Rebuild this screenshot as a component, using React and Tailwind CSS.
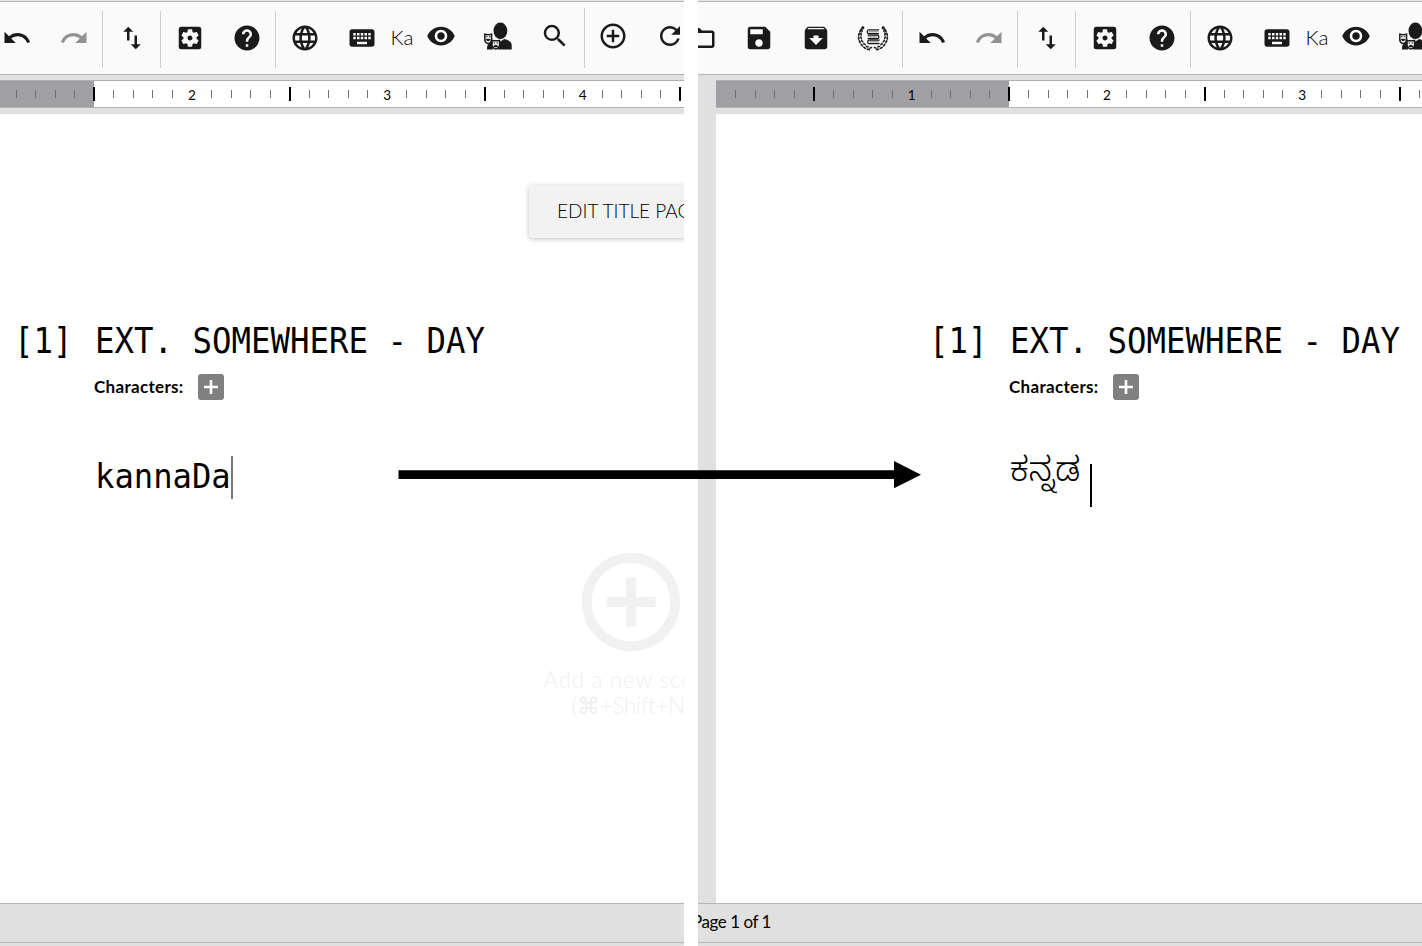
import React from "react";
import {
  MdFolderOpen, MdSave, MdArchive, MdUndo, MdRedo, MdImportExport,
  MdSettingsApplications, MdHelp, MdLanguage, MdKeyboard, MdVisibility,
  MdSearch, MdAddCircleOutline, MdRefresh,
} from "react-icons/md";

const LEAVES = [
  [12.4, 25, 10], [8.8, 23.8, 30], [5.8, 21.4, 50], [3.6, 18.4, 68], [2.4, 15, 85],
  [2.4, 11.4, 100], [3.4, 8, 115], [5, 5, 125],
];

function LaurelHalf() {
  return (
    <g>
      <path d="M6.4 4C2.6 9.5 2.8 20 13.2 24.6" fill="none" stroke="currentColor" strokeWidth="0.6" />
      {LEAVES.map(([x, y, a], i) => (
        <g key={i}>
          <ellipse cx={x - 1} cy={y + 0.6} rx="1.9" ry="0.9" transform={`rotate(${a} ${x} ${y})`} />
          <ellipse cx={x + 1.5} cy={y - 1.3} rx="1.5" ry="0.8" transform={`rotate(${a - 35} ${x + 1.5} ${y - 1.3})`} />
        </g>
      ))}
    </g>
  );
}

function LaurelIcon() {
  return (
    <svg width="32" height="28" viewBox="0 0 32 28" fill="currentColor">
      <LaurelHalf />
      <g transform="translate(32 0) scale(-1 1)"><LaurelHalf /></g>
      <g fill="none" stroke="currentColor">
        <path strokeWidth="1.3" d="M22 5.8H11.6c-1.7 0-1.7 3.9 0 3.9H22M10.6 11.2h10c1.7 0 1.7 3.4 0 3.4h-10M22.6 16.2H12c-1.7 0-1.7 3.4 0 3.4h10.6" />
        <path strokeWidth="0.8" opacity="0.7" d="M12 7.8h9.5M11 12.9h9.5M12.5 17.9h9.5" />
      </g>
    </svg>
  );
}

function CharactersIcon() {
  return (
    <svg width="28" height="28" viewBox="0 0 28 28" fill="currentColor">
      <ellipse cx="16.4" cy="8.8" rx="6.9" ry="8.3" />
      <path d="M14 27.4V21l6.3-4c3.8 1 7.4 2.8 7.4 6.2v4.2z" />
      <path d="M3 27.4c0-3 .3-4.6 1.7-5.6L8 19.6l1 7.8z" />
      <path d="M.8 12.2c2.2.6 4.6.6 6.8 0v5.2c0 2.2-1.5 3.6-3.4 4.2-1.9-.6-3.4-2-3.4-4.2z" fill="#fafafa" stroke="currentColor" strokeWidth="1.5" />
      <path d="M1.9 14.7h1.6M4.9 14.7h1.6M2.2 17.3h4c-.6 1.9-3.4 1.9-4 0z" stroke="currentColor" strokeWidth="1" />
      <path d="M8 18.4c2.6.6 5 .6 7.6 0v4.4c0 2.2-1.8 3.7-3.8 4.3-2-.6-3.8-2.1-3.8-4.3z" fill="#fafafa" stroke="currentColor" strokeWidth="1.5" />
      <path d="M9.5 21h1.6M12.5 21h1.6M10 24.8c.6-1.9 3-1.9 3.6 0z" stroke="currentColor" strokeWidth="1.1" />
    </svg>
  );
}

function Tool({ icon: Icon, className = "" }) {
  return (
    <div className={"flex h-full w-[57px] shrink-0 items-center justify-center " + className}>
      <Icon size={30} />
    </div>
  );
}

function Divider({ className = "h-[57px] mt-[3px]" }) {
  return (
    <div className="flex w-[1.2px] shrink-0 justify-center">
      <div className={"w-px shrink-0 bg-[#cfcfcf] " + className} />
    </div>
  );
}

function Toolbar() {
  return (
    <header className="h-[75px] border-b border-[#b3b3b3] bg-[#fafafa] text-[#1a1a1a]">
      <div className="h-[2px] border-b border-[#b5b5b5] bg-[#e6e6e6]" />
      <div className="-ml-[24.2px] flex h-[72px] items-center">
        <Tool icon={MdFolderOpen} />
        <Tool icon={MdSave} />
        <Tool icon={MdArchive} />
        <div className="flex w-[57px] shrink-0 items-center justify-center"><LaurelIcon /></div>
        <Divider />
        <Tool icon={MdUndo} />
        <Tool icon={MdRedo} className="text-[#929292]" />
        <Divider />
        <Tool icon={MdImportExport} />
        <Divider />
        <Tool icon={MdSettingsApplications} />
        <Tool icon={MdHelp} />
        <Divider />
        <Tool icon={MdLanguage} />
        <Tool icon={MdKeyboard} />
        <div className="mb-[2px] w-[22px] shrink-0 whitespace-nowrap text-center font-[Lato] text-[20.5px] leading-6 font-light text-black">Ka</div>
        <Tool icon={MdVisibility} className="pb-[4px]" />
        <Tool icon={CharactersIcon} className="pb-[4px]" />
        <Tool icon={MdSearch} className="pb-[4px]" />
        <Divider className="h-[60px]" />
        <Tool icon={MdAddCircleOutline} className="pb-[4px]" />
        <Tool icon={MdRefresh} className="pb-[4px]" />
      </div>
    </header>
  );
}

function Ruler() {
  return (
    <div className="ml-[18px] h-[28px] overflow-hidden border-y border-[#b0b0b0] bg-[linear-gradient(90deg,#a09fa4_293px,#fff_293px)]">
      <div className="ml-[10.1px] flex h-full items-center">
        {Array.from({ length: 48 }, (_, k) => {
          const n = k + 1;
          return (
            <div key={n} className="flex w-[19.54px] shrink-0 justify-center">
              {n % 10 === 0 ? (
                <span className="pt-px font-[Lato] text-[13.5px] leading-4 text-black">{n / 10}</span>
              ) : n % 5 === 0 ? (
                <i className="h-[14px] w-[2px] bg-black" />
              ) : (
                <i className="h-[8px] w-px bg-[#6f6f6f]" />
              )}
            </div>
          );
        })}
      </div>
    </div>
  );
}

function ScriptPage({ children }) {
  return (
    <main className="ml-[18px] mt-[6px] h-[789px] bg-white pt-[71px]">
      <button className="ml-[728px] block h-[53px] w-[190px] rounded-[3px] bg-[#f2f2f2] pl-[28px] text-left whitespace-nowrap font-[Lato] text-[19px] font-light text-black shadow-[0_1px_5px_rgba(0,0,0,0.25)]">
        EDIT TITLE PAGE
      </button>
      <h1 className="mt-[84px] flex h-[40px] origin-[50%_32px] scale-y-[1.07] whitespace-pre font-['DejaVu_Sans_Mono',monospace] text-[32.4px] leading-[40px] text-black">
        <span className="ml-[213px] w-[81px]">[1]</span>
        <span>EXT. SOMEWHERE - DAY</span>
      </h1>
      <div className="mt-[12px] ml-[293px] flex h-[26px] items-center">
        <span className="w-[104.4px] font-[Lato] text-[17px] font-bold tracking-[0.32px] text-black">Characters:</span>
        <button className="flex h-[26px] w-[26px] items-center justify-center rounded-[3px] bg-[#808080]">
          <svg width="26" height="26" viewBox="0 0 26 26">
            <path d="M13 6v14M6 13h14" stroke="#fff" strokeWidth="2.6" />
          </svg>
        </button>
      </div>
      <div className="mt-[56px] ml-[294px] flex h-[51px] text-black">{children}</div>
      <div className="mt-[36px] ml-[710px] flex w-[240px] flex-col items-center font-[Lato] text-[22.5px] leading-[26px] font-light text-[#efefef]">
        <MdAddCircleOutline size={118} className="text-[#f1f1f1]" />
        <span className="mt-[6px] tracking-[0.7px]">Add a new scene</span>
        <span className="tracking-[-0.3px]">(⌘+Shift+N)</span>
      </div>
    </main>
  );
}

function Editor({ children }) {
  return (
    <div className="h-[946px] w-[1000px] bg-[#e0e0e0]">
      <Toolbar />
      <div className="h-[5px]" />
      <Ruler />
      <ScriptPage>{children}</ScriptPage>
      <footer className="h-[40px] border-y border-[#b5b5b5] font-[Lato] text-[17px] leading-[36px] tracking-[-0.45px] text-black">
        <span className="-ml-[6px]">Page 1 of 1</span>
      </footer>
    </div>
  );
}

export default function App() {
  return (
    <div className="relative flex h-[946px] w-[1422px] gap-[14px] overflow-hidden bg-white">
      <section className="w-[684px] shrink-0 overflow-hidden">
        <div className="-ml-[217px]">
          <Editor>
            <span className="mt-px h-[40px] w-[136px] origin-[0_32px] scale-y-[1.03] font-['DejaVu_Sans_Mono',monospace] text-[32.2px] leading-[40px]">kannaDa</span>
            <i className="h-[43px] w-[2px] bg-[#777]" />
          </Editor>
        </div>
      </section>
      <section className="w-[724px] shrink-0 overflow-hidden">
        <Editor>
          <span className="w-[80px] pt-px whitespace-nowrap font-['Noto_Sans_Kannada','Noto_Sans',sans-serif] text-[33.5px] leading-[40px]"><span className="font-light tracking-[0.4px]">ಕನ್ನಡ</span></span>
          <i className="mt-[8px] h-[43px] w-[2px] bg-black" />
        </Editor>
      </section>
      <svg className="absolute left-[398px] top-[461px]" width="524" height="28" viewBox="0 0 524 28">
        <path d="M0.5 9.3H496V0L523 13.7L496 27.3V18H0.5z" />
      </svg>
    </div>
  );
}
